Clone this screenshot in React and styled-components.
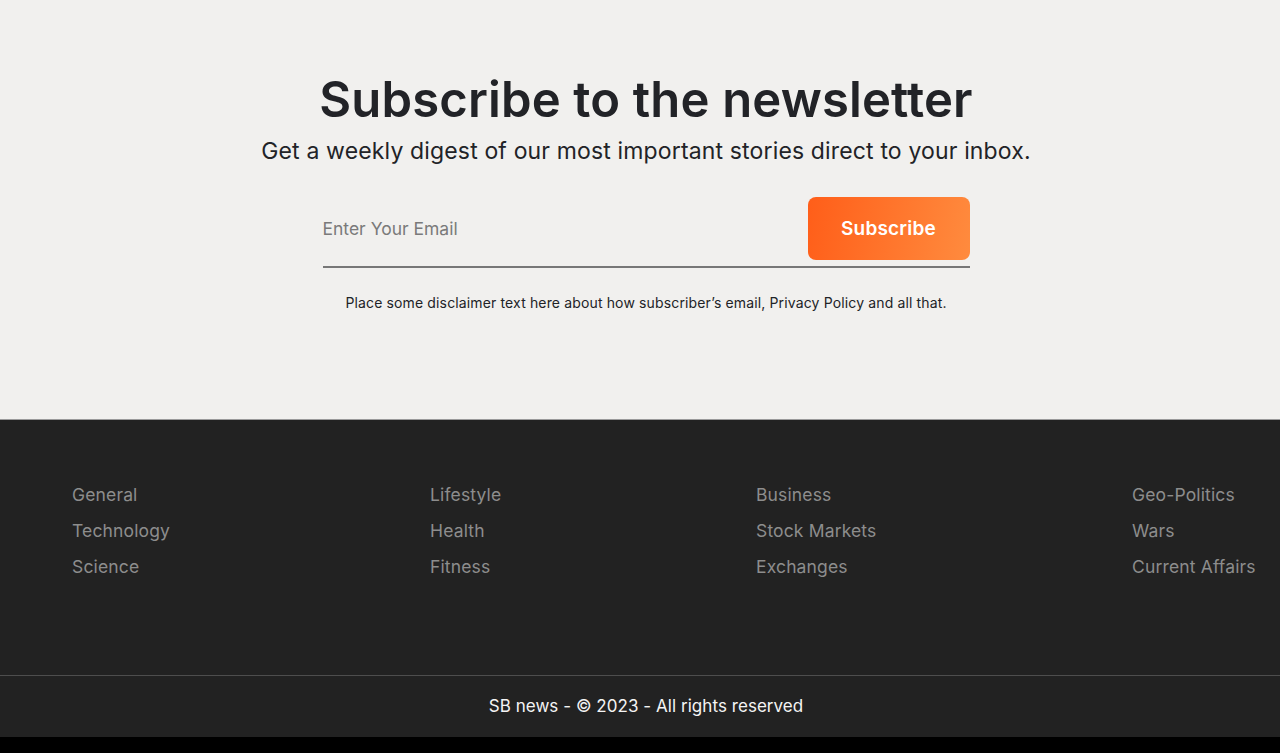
import React from 'react';
import styled, { createGlobalStyle } from 'styled-components';

const GlobalStyle = createGlobalStyle`
  html, body {
    margin: 0;
    padding: 0;
    background: #000;
  }
  body {
    font-family: Inter, "Noto Sans", sans-serif;
  }
  * {
    box-sizing: border-box;
  }
`;

const Page = styled.div`
  display: flex;
  flex-direction: column;
`;

const NewsletterSection = styled.section`
  height: 420px;
  background-color: #f1f0ee;
  border-bottom: 1px solid #9a9a9a;
  display: flex;
  flex-direction: column;
  align-items: center;
  padding: 71px 0 0 12px;
`;

const Title = styled.h2`
  margin: 0;
  font-size: 49px;
  line-height: 58px;
  font-weight: 600;
  color: #222327;
  letter-spacing: 0.15px;
`;

const Subtitle = styled.p`
  margin: 7px 0 0;
  font-size: 23px;
  line-height: 30px;
  font-weight: 400;
  color: #222327;
  letter-spacing: 0.15px;
`;

const Form = styled.form`
  width: 647px;
  margin-top: 31px;
  display: flex;
  align-items: center;
  padding-bottom: 6px;
  border-bottom: 2px solid #777;
`;

const EmailInput = styled.input`
  flex: 1;
  border: none;
  outline: none;
  background: transparent;
  font-family: inherit;
  font-size: 17.5px;
  color: #333;
  padding: 0;

  &::placeholder {
    color: #7a7a7a;
  }
`;

const SubscribeButton = styled.button`
  width: 162px;
  height: 63px;
  border: none;
  border-radius: 8px;
  background: linear-gradient(100deg, #ff5e19 0%, #ff8b3e 100%);
  color: #fff;
  font-family: inherit;
  font-size: 19px;
  font-weight: 600;
  letter-spacing: 0.2px;
  cursor: pointer;
`;

const Disclaimer = styled.p`
  margin: 25px 0 0;
  font-size: 14px;
  line-height: 20px;
  color: #222327;
  letter-spacing: 0.14px;
`;

const Footer = styled.footer`
  background-color: #222222;
`;

const LinkColumns = styled.div`
  height: 255px;
  padding: 57px 0 0 72px;
  display: grid;
  grid-template-columns: 358px 326px 376px auto;
  align-items: start;
`;

const LinkColumn = styled.ul`
  list-style: none;
  margin: 0;
  padding: 0;
`;

const LinkItem = styled.li`
  font-size: 17.5px;
  line-height: 36px;
  color: #8d8d8d;
  letter-spacing: 0.15px;
  white-space: nowrap;
`;

const BottomBar = styled.div`
  height: 62px;
  border-top: 1px solid #4e4e4e;
  display: flex;
  align-items: center;
  justify-content: center;
  padding: 0 0 2px 12px;
  color: #f4f4f4;
  font-size: 17px;
  letter-spacing: 0.05px;
`;

const columns = [
  ['General', 'Technology', 'Science'],
  ['Lifestyle', 'Health', 'Fitness'],
  ['Business', 'Stock Markets', 'Exchanges'],
  ['Geo-Politics', 'Wars', 'Current Affairs'],
];

export default function App() {
  return (
    <Page>
      <GlobalStyle />
      <NewsletterSection>
        <Title>Subscribe to the newsletter</Title>
        <Subtitle>Get a weekly digest of our most important stories direct to your inbox.</Subtitle>
        <Form onSubmit={(e) => e.preventDefault()}>
          <EmailInput type="email" placeholder="Enter Your Email" />
          <SubscribeButton type="submit">Subscribe</SubscribeButton>
        </Form>
        <Disclaimer>
          Place some disclaimer text here about how subscriber’s email, Privacy Policy and all that.
        </Disclaimer>
      </NewsletterSection>
      <Footer>
        <LinkColumns>
          {columns.map((col, i) => (
            <LinkColumn key={i}>
              {col.map((item) => (
                <LinkItem key={item}>{item}</LinkItem>
              ))}
            </LinkColumn>
          ))}
        </LinkColumns>
        <BottomBar>SB news - © 2023 - All rights reserved</BottomBar>
      </Footer>
    </Page>
  );
}
